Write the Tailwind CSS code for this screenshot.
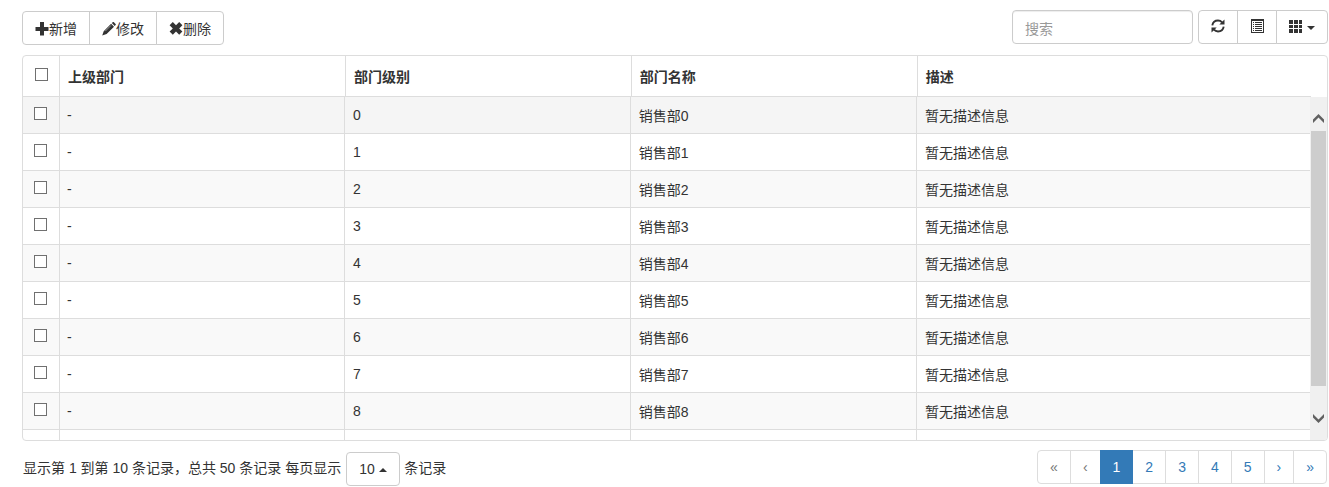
<!DOCTYPE html>
<html lang="zh-CN">
<head>
<meta charset="utf-8">
<meta name="viewport" content="width=device-width, initial-scale=1">
<title>部门管理</title>
<script src="https://cdn.jsdelivr.net/npm/@tailwindcss/browser@4"></script>
</head>
<body class="bg-white font-['Liberation_Sans','Noto_Sans_CJK_SC',sans-serif] text-sm/5 text-[#333]">
<main class="pt-[10px] pr-px pl-[22px]">

  <div class="flex items-start justify-between">
    <div class="mt-px flex">
      <button type="button" class="flex h-[34px] items-center rounded-l border border-[#ccc] bg-white px-3 pt-px">
        <svg class="size-[14px]" viewBox="0 0 14 14" fill="#333" aria-hidden="true"><path d="M5 0h4v5h4.500v4H9v4.500H5V9H.5V5H5z"/></svg>新增
      </button>
      <button type="button" class="-ml-px flex h-[34px] items-center border border-[#ccc] bg-white px-3 pt-px">
        <svg class="size-[14px]" viewBox="0 0 14 14" fill="#333" aria-hidden="true"><path d="M10.700 .2q.6-.5 1.200 0l1.700 1.700q.5.6 0 1.200l-.9.9-2.900-2.900zM9.100 1.800l2.900 2.900-7.400 7.400L.2 13.500l1.500-4.300z"/><path d="M3.300 9.100l5.700-5.700" stroke="#fff" stroke-width=".5"/></svg>修改
      </button>
      <button type="button" class="-ml-px flex h-[34px] items-center rounded-r border border-[#ccc] bg-white px-3 pt-px">
        <svg class="size-[14px]" viewBox="0 0 14 14" fill="#333" aria-hidden="true"><path d="M3.800 0L7 3.200 10.200 0l3.200 3.200L10.200 6.400l3.200 3.200-3.200 3.200L7 9.600l-3.200 3.200L.6 9.600l3.200-3.200L.6 3.200z"/></svg>删除
      </button>
    </div>

    <div class="flex gap-[5px]">
      <input type="text" placeholder="搜索" aria-label="搜索" class="h-[34px] w-[181px] rounded border border-[#ccc] bg-white px-3 pt-[3px] shadow-[inset_0_1px_1px_rgba(0,0,0,0.075)] placeholder:text-[#999]">
      <div class="flex">
        <button type="button" aria-label="刷新" class="flex h-[34px] items-center rounded-l border border-[#ccc] bg-white px-3 pb-[2px]">
          <svg class="size-[14px]" viewBox="0 0 14 14" fill="none" stroke="#333" stroke-width="1.900" aria-hidden="true"><path d="M1.300 6.300C1.800 3.400 4.200 1.500 7 1.500c1.700 0 3.100.7 4.100 1.800M12.700 7.700c-.5 2.900-2.900 4.800-5.700 4.800-1.700 0-3.100-.7-4.100-1.800"/><path d="M13.500.4v5.200H8.300zM.5 13.600V8.400h5.200z" fill="#333" stroke="none"/></svg>
        </button>
        <button type="button" aria-label="切换视图" class="-ml-px flex h-[34px] items-center border border-[#ccc] bg-white px-3 pb-[2px]">
          <svg class="size-[14px]" viewBox="0 0 14 14" fill="#333" shape-rendering="crispEdges" aria-hidden="true"><path fill-rule="evenodd" d="M1 0h13v14H1zM2 2v11h11V2z"/><path d="M3 3h1v1H3zM5 3h7v1H5zM3 5h1v1H3zM5 5h7v1H5zM3 7h1v1H3zM5 7h7v1H5zM3 9h1v1H3zM5 9h7v1H5zM3 11h1v1H3zM5 11h7v1H5z"/></svg>
        </button>
        <button type="button" aria-label="选择列" aria-haspopup="true" class="-ml-px flex h-[34px] items-center gap-1 rounded-r border border-[#ccc] bg-white px-3 pb-[2px]">
          <svg class="size-[14px]" viewBox="0 0 14 14" fill="#333" shape-rendering="crispEdges" aria-hidden="true"><path d="M0 1h4v4H0zM5 1h4v4H5zM10 1h3v4H10zM0 6h4v3H0zM5 6h4v3H5zM10 6h3v3H10zM0 10h4v4H0zM5 10h4v4H5zM10 10h3v4H10z"/></svg>
          <svg class="mt-1 h-1 w-2" viewBox="0 0 8 4" fill="#333" aria-hidden="true"><path d="M0 0h8L4 4z"/></svg>
        </button>
      </div>
    </div>
  </div>

  <section class="mt-[10px] overflow-hidden rounded border border-[#ddd]" aria-label="部门列表">
    <div class="pr-4">
      <table class="w-full table-fixed border-separate border-spacing-0 text-left">
        <colgroup><col class="w-[37px]"><col class="w-[22.2%]"><col class="w-[22.2%]"><col class="w-[22.2%]"><col></colgroup>
        <thead>
          <tr class="h-[41px]">
            <th class="border-r border-b border-[#ddd] pb-1"><input type="checkbox" aria-label="全选" class="mx-auto block size-[13px] appearance-none border border-[#707070] bg-white"></th>
            <th class="border-r border-b border-[#ddd] px-2 pt-[2px] font-bold">上级部门</th>
            <th class="border-r border-b border-[#ddd] px-2 pt-[2px] font-bold">部门级别</th>
            <th class="border-r border-b border-[#ddd] px-2 pt-[2px] font-bold">部门名称</th>
            <th class="border-b border-[#ddd] px-2 pt-[2px] font-bold">描述</th>
          </tr>
        </thead>
      </table>
    </div>
    <div class="flex h-[343px]">
      <div class="min-w-0 flex-1 overflow-hidden">
        <table class="w-full table-fixed border-separate border-spacing-0 text-left">
          <colgroup><col class="w-[37px]"><col class="w-[22.15%]"><col class="w-[22.2%]"><col class="w-[22.25%]"><col></colgroup>
          <tbody id="rows"></tbody>
        </table>
      </div>
      <div class="flex w-[17px] flex-col items-center bg-[#f0f0f0]" aria-hidden="true">
        <div class="flex h-[34px] items-end pb-2"><svg class="h-[9px] w-[11px]" viewBox="0 0 11 9" fill="#606060"><path d="M5.500 0L11 5.500V9L5.500 3.600 0 9V5.500z"/></svg></div>
        <div class="h-[255px] w-[15px] bg-[#cdcdcd]"></div>
        <div class="flex flex-1 items-center pt-[10px]"><svg class="h-[9px] w-[11px]" viewBox="0 0 11 9" fill="#606060"><path d="M5.500 9L11 3.500V0L5.500 5.400 0 0v3.500z"/></svg></div>
      </div>
    </div>
  </section>

  <div class="mt-[9px] flex items-start justify-between pr-px">
    <div class="mt-[2px] flex items-center gap-1">
      <label for="size" class="pr-[2px] pb-[2px] pl-px">显示第 1 到第 10 条记录，总共 50 条记录 每页显示</label>
      <span class="relative -ml-px">
        <select id="size" class="block h-[34px] w-[54px] appearance-none rounded border border-[#ccc] bg-white pl-3">
          <option>10</option><option>25</option><option>50</option>
        </select>
        <svg class="pointer-events-none absolute top-4 right-[13px] h-1 w-2" viewBox="0 0 8 4" fill="#333" aria-hidden="true"><path d="M0 4h8L4 0z"/></svg>
      </span>
      <span class="pb-[2px]">条记录</span>
    </div>
    <nav class="flex text-[#337ab7]" aria-label="分页">
      <a href="#" class="rounded-l border border-[#ddd] px-3 py-[6px] text-[#777]">«</a>
      <a href="#" class="-ml-px border border-[#ddd] px-3 py-[6px] text-[#777]">‹</a>
      <a href="#" aria-current="page" class="z-10 -ml-px border border-[#337ab7] bg-[#337ab7] px-3 py-[6px] text-white">1</a>
      <a href="#" class="-ml-px border border-[#ddd] px-3 py-[6px]">2</a>
      <a href="#" class="-ml-px border border-[#ddd] px-3 py-[6px]">3</a>
      <a href="#" class="-ml-px border border-[#ddd] px-3 py-[6px]">4</a>
      <a href="#" class="-ml-px border border-[#ddd] px-3 py-[6px]">5</a>
      <a href="#" class="-ml-px border border-[#ddd] px-3 py-[6px]">›</a>
      <a href="#" class="-ml-px rounded-r border border-[#ddd] px-3 py-[6px]">»</a>
    </nav>
  </div>
</main>
<script>
  const rows = Array.from({ length: 9 }, (_, i) => `
    <tr class="h-[37px] ${i === 0 ? 'bg-[#f5f5f5]' : i % 2 ? 'bg-white' : 'bg-[#f9f9f9]'}">
      <td class="border-r border-b border-[#ddd] pr-[2px] pb-[3px]"><input type="checkbox" aria-label="选择销售部${i}" class="mx-auto block size-[13px] appearance-none border border-[#707070] bg-white"></td>
      <td class="border-r border-b border-[#ddd] pr-2 pl-[7px]">-</td>
      <td class="border-r border-b border-[#ddd] px-2">${i}</td>
      <td class="border-r border-b border-[#ddd] px-2 pt-px">销售部${i}</td>
      <td class="border-b border-[#ddd] px-2 pt-px">暂无描述信息</td>
    </tr>`);
  const spacer = `<tr class="h-[37px]">${`<td class="border-r border-[#ddd]"></td>`.repeat(4)}<td></td></tr>`;
  document.getElementById('rows').innerHTML = rows.join('') + spacer;
</script>
</body>
</html>
